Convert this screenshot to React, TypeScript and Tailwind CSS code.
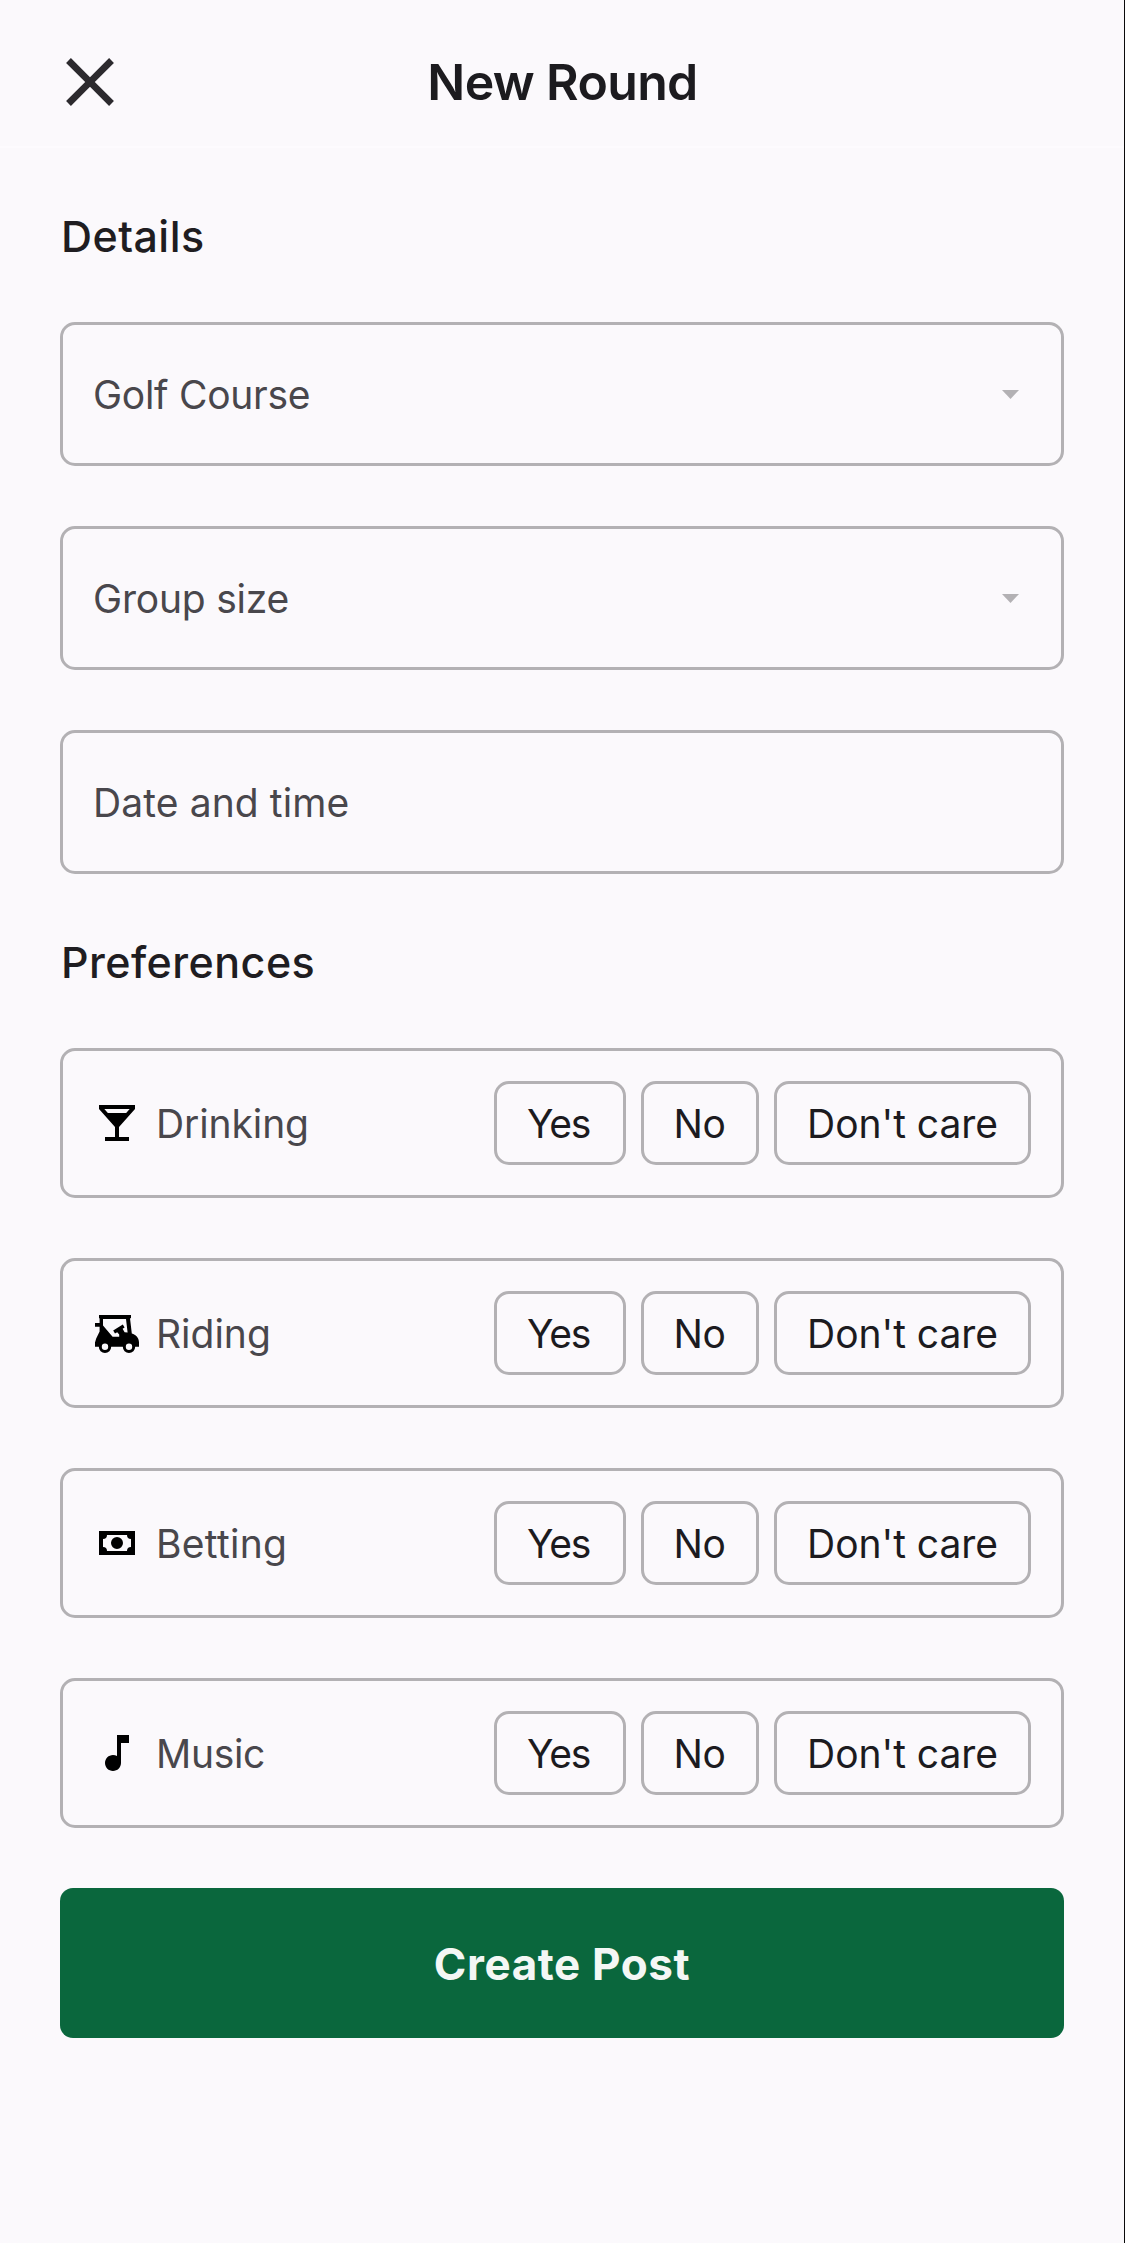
import type { ReactNode } from "react";

const inkBorder = "border-[3px] border-[#b3b1b4]";

function Glyph({ children }: { children: ReactNode }) {
  return (
    <svg viewBox="0 0 24 24" className="size-12 shrink-0 fill-black" aria-hidden="true">
      {children}
    </svg>
  );
}

function CocktailIcon() {
  return (
    <Glyph>
      <path d="M21 5V3H3v2l8 9v5H6v2h12v-2h-5v-5l8-9zM7.43 7L5.66 5h12.69l-1.78 2H7.43z" />
    </Glyph>
  );
}

function GolfCartIcon() {
  return (
    <Glyph>
      <path
        fillRule="evenodd"
        d="M3 3H19V4.6H18.5L19.4 12.3C21.4 12.9 22.9 14.4 23 16.6V18.9H21.1A3.1 3.1 0 0 1 14.9 18.9H9.1A3.1 3.1 0 0 1 2.9 18.9H1V16.8L1.6 14.8L3.3 11.2V8.9H1V7H3.3V4.6H3ZM5 5V8.2L9.8 13.9H13.1V12.8L12.1 11.6L11 12.2L10.1 10.7L14.9 7.7L15.8 9.2L14.8 9.9L15.8 11.6L17.3 11.8L16.5 5ZM6 17.3A1.6 1.6 0 1 0 6 20.5A1.6 1.6 0 1 0 6 17.3ZM18 17.3A1.6 1.6 0 1 0 18 20.5A1.6 1.6 0 1 0 18 17.3Z"
      />
    </Glyph>
  );
}

function CashIcon() {
  return (
    <Glyph>
      <path d="M3,6H21V18H3V6M12,9A3,3 0 0,1 15,12A3,3 0 0,1 12,15A3,3 0 0,1 9,12A3,3 0 0,1 12,9M7,8A2,2 0 0,1 5,10V14A2,2 0 0,1 7,16H17A2,2 0 0,1 19,14V10A2,2 0 0,1 17,8H7Z" />
    </Glyph>
  );
}

function MusicIcon() {
  return (
    <Glyph>
      <path d="M12 3V13.55C11.41 13.21 10.73 13 10 13C7.79 13 6 14.79 6 17S7.79 21 10 21 14 19.21 14 17V7H18V3H12Z" />
    </Glyph>
  );
}

const fields = [
  { label: "Golf Course", menu: true, tracking: "tracking-[-0.28px]" },
  { label: "Group size", menu: true, tracking: "tracking-[-0.2px]" },
  { label: "Date and time", menu: false, tracking: "tracking-[0.1px]" },
];

const preferences = [
  { label: "Drinking", icon: <CocktailIcon />, tracking: "tracking-[-0.1px]" },
  { label: "Riding", icon: <GolfCartIcon />, tracking: "tracking-normal" },
  { label: "Betting", icon: <CashIcon />, tracking: "tracking-[0.3px]" },
  { label: "Music", icon: <MusicIcon />, tracking: "tracking-[-0.3px]" },
];

const choices = [
  { label: "Yes", size: "w-[132px] pr-[3px] tracking-[-1.2px]" },
  { label: "No", size: "w-[118px] pr-px tracking-[-0.5px]" },
  { label: "Don't care", size: "w-[257px] tracking-[-0.05px]" },
];

function SectionTitle({ children }: { children: ReactNode }) {
  return (
    <h2 className="pl-px text-[43px] leading-[60px] font-medium tracking-[0.45px] text-[#1f1d21]">
      {children}
    </h2>
  );
}

export default function App() {
  return (
    <div className="flex h-[2243px] w-full flex-col border-r border-[#0a0a0a] bg-[#fbf9fc] font-['Inter',sans-serif]">
      <header className="grid h-[148px] shrink-0 grid-cols-[90px_1fr_90px] items-center border-b-2 border-[#fdfbfe] px-[45px] pt-[18px]">
        <button aria-label="Close" className="flex size-[90px] items-center justify-center">
          <svg viewBox="0 0 24 24" className="size-[82px] fill-[#2c2a2e]">
            <path d="M19 6.41L17.59 5 12 10.59 6.41 5 5 6.41 10.59 12 5 17.59 6.41 19 12 13.41 17.59 19 19 17.59 13.41 12z" />
          </svg>
        </button>
        <h1 className="pl-px text-center text-[50px] leading-[60px] font-semibold tracking-[-0.65px] text-[#1c1b1f]">
          New Round
        </h1>
      </header>

      <main className="flex flex-col px-[60px] pt-[58px]">
        <SectionTitle>Details</SectionTitle>
        <div className="mt-14 mb-[58px] flex flex-col gap-[60px]">
          {fields.map((f) => (
            <div
              key={f.label}
              className={`flex h-36 items-center justify-between rounded-[15px] pr-[42px] pl-[30px] ${inkBorder}`}
            >
              <span className={`pt-0.5 text-[39px] text-[#49474c] ${f.tracking}`}>{f.label}</span>
              {f.menu && (
                <svg viewBox="0 0 17 9" className="mt-px h-[9px] w-[17px] fill-[#b3b1b4]">
                  <path d="M0 0H17L8.5 9Z" />
                </svg>
              )}
            </div>
          ))}
        </div>

        <SectionTitle>Preferences</SectionTitle>
        <div className="mt-14 flex flex-col gap-[60px]">
          {preferences.map((p) => (
            <div
              key={p.label}
              className={`flex h-[150px] items-center rounded-[15px] px-[30px] ${inkBorder}`}
            >
              {p.icon}
              <span className={`ml-[15px] pt-0.5 text-[39px] text-[#49474c] ${p.tracking}`}>
                {p.label}
              </span>
              <div className="ml-auto flex gap-[15px]">
                {choices.map((c) => (
                  <button
                    key={c.label}
                    className={`h-[84px] rounded-[15px] pt-0.5 text-center text-[39px] whitespace-nowrap text-[#1c1b1f] ${c.size} ${inkBorder}`}
                  >
                    {c.label}
                  </button>
                ))}
              </div>
            </div>
          ))}
        </div>

        <button className="mt-[60px] h-[150px] rounded-[13px] bg-[#0a673d] pt-px text-[44px] font-bold tracking-[0.6px] text-[#f4f7f5]">
          Create Post
        </button>
      </main>
    </div>
  );
}
